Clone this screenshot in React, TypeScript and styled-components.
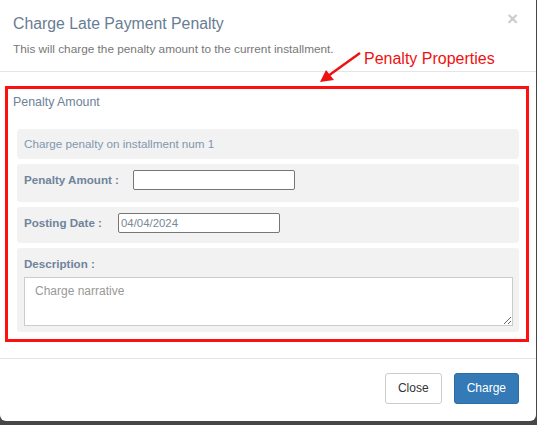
import React from "react";
import styled, { createGlobalStyle } from "styled-components";

const GlobalStyle = createGlobalStyle`
  html, body {
    margin: 0;
    padding: 0;
    background: #474747;
    font-family: "Liberation Sans", Arial, sans-serif;
  }
  * {
    box-sizing: border-box;
  }
`;

export default function App() {
  return (
    <>
      <GlobalStyle />
      <Modal>
        <Header>
          <Title>Charge Late Payment Penalty</Title>
          <Subtitle>
            This will charge the penalty amount to the current installment.
          </Subtitle>
          <CloseX>×</CloseX>
        </Header>

        <Body>
          <Highlight>
            <Legend>Penalty Amount</Legend>
            <Rows>
              <Row $height="30px" $pad="7px 7px">
                <Info>Charge penalty on installment num 1</Info>
              </Row>
              <Row $inline $height="38px" $pad="6px 7px">
                <Label $width="109px">Penalty Amount :</Label>
                <Input type="text" />
              </Row>
              <Row $inline $height="36px" $pad="6px 7px">
                <Label $width="94px">Posting Date :</Label>
                <Input type="text" defaultValue="04/04/2024" />
              </Row>
              <Row $height="84px" $pad="6px 7px">
                <Label>Description :</Label>
                <TextArea placeholder="Charge narrative" />
              </Row>
            </Rows>
          </Highlight>
        </Body>

        <Footer>
          <Button>Close</Button>
          <Button $primary>Charge</Button>
        </Footer>

        <Annotation>
          <svg width="50" height="34" viewBox="0 0 50 34">
            <line
              x1="40"
              y1="4"
              x2="8"
              y2="27"
              stroke="#ee1111"
              strokeWidth="2.5"
            />
            <polygon points="0,33 6,21 14,31" fill="#ee1111" />
          </svg>
          <AnnotationText>Penalty Properties</AnnotationText>
        </Annotation>
      </Modal>
    </>
  );
}

const Modal = styled.div`
  position: relative;
  width: 536px;
  height: 421px;
  background: #fff;
  border-radius: 0 0 6px 6px;
  display: flex;
  flex-direction: column;
`;

const Header = styled.div`
  position: relative;
  padding: 14px 13px 14px;
  border-bottom: 1px solid #e5e5e5;
`;

const Title = styled.h4`
  margin: 0;
  font-size: 15.8px;
  line-height: 20px;
  font-weight: normal;
  color: #687c93;
`;

const Subtitle = styled.p`
  margin: 7px 0 0;
  font-size: 11.8px;
  line-height: 16px;
  color: #777;
`;

const CloseX = styled.span`
  position: absolute;
  top: 8px;
  right: 18px;
  font-size: 19px;
  font-weight: bold;
  line-height: 22px;
  color: #000;
  opacity: 0.2;
`;

const Body = styled.div`
  padding: 14px 5px 16px;
`;

const Highlight = styled.div`
  width: 524px;
  border: 3px solid #ff1010;
  padding: 6px 7px 7px 5px;
`;

const Legend = styled.div`
  font-size: 12.4px;
  line-height: 14px;
  color: #6e8299;
  margin-bottom: 20px;
`;

const Rows = styled.div`
  display: flex;
  flex-direction: column;
  gap: 5px;
  margin-left: 4px;
`;

const Row = styled.div<{ $inline?: boolean; $height: string; $pad: string }>`
  background: #f2f2f2;
  border-radius: 3px;
  height: ${(p) => p.$height};
  padding: ${(p) => p.$pad};
  display: flex;
  flex-direction: ${(p) => (p.$inline ? "row" : "column")};
  align-items: ${(p) => (p.$inline ? "flex-start" : "stretch")};
`;

const Info = styled.div`
  font-size: 11.7px;
  line-height: 16px;
  color: #8197ae;
`;

const Label = styled.label<{ $width?: string }>`
  width: ${(p) => p.$width ?? "auto"};
  font-size: 11.6px;
  line-height: 20px;
  font-weight: bold;
  color: #6f849b;
`;

const Input = styled.input`
  width: 162px;
  height: 20px;
  border: 1px solid #767676;
  border-radius: 2px;
  padding: 1px 2px;
  font-family: "Liberation Sans", Arial, sans-serif;
  font-size: 11.4px;
  color: #7b8896;
  background: #fff;
`;

const TextArea = styled.textarea`
  margin-top: 3px;
  width: 489px;
  height: 50px;
  border: 1px solid #ccc;
  border-radius: 0;
  padding: 5px 10px;
  font-family: "Liberation Sans", Arial, sans-serif;
  font-size: 12px;
  line-height: 16px;
  color: #555;
  resize: vertical;

  &::placeholder {
    color: #999;
  }
`;

const Footer = styled.div`
  border-top: 1px solid #e5e5e5;
  padding: 14px 17px 16px;
  display: flex;
  justify-content: flex-end;
  gap: 12px;
`;

const Button = styled.button<{ $primary?: boolean }>`
  height: 31px;
  padding: 6px 12px;
  font-family: "Liberation Sans", Arial, sans-serif;
  font-size: 12px;
  line-height: 17px;
  border-radius: 3px;
  border: 1px solid ${(p) => (p.$primary ? "#2e6da4" : "#ccc")};
  background: ${(p) => (p.$primary ? "#337ab7" : "#fff")};
  color: ${(p) => (p.$primary ? "#fff" : "#333")};
`;

const Annotation = styled.div`
  position: absolute;
  left: 320px;
  top: 49px;
  display: flex;
  align-items: flex-start;
`;

const AnnotationText = styled.span`
  margin-left: -6px;
  font-size: 16px;
  line-height: 20px;
  color: #ee1111;
`;
